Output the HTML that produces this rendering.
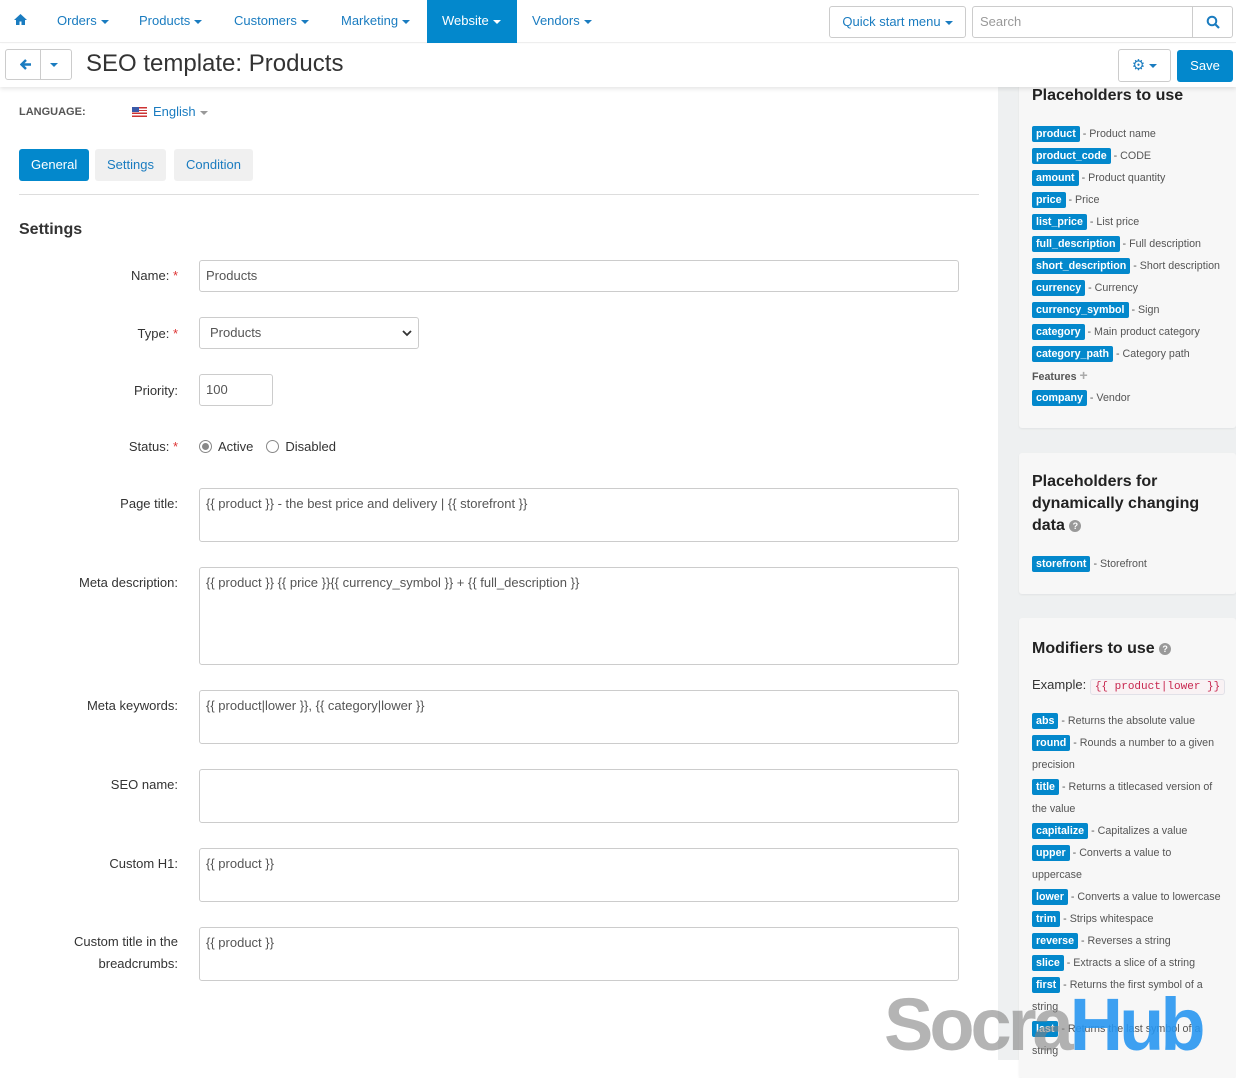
<!DOCTYPE html>
<html><head><meta charset="utf-8"><style>
*{box-sizing:border-box;margin:0;padding:0}
body{width:1236px;height:1060px;overflow:hidden;font-family:"Liberation Sans",sans-serif;font-size:13px;color:#333;background:#fff;position:relative}
.nav{position:absolute;top:0;left:0;right:0;height:43px;background:#fff;border-bottom:1px solid #eee}
.nav a{position:absolute;top:0;height:43px;line-height:42px;color:#1a7cc0;font-size:13px;text-decoration:none}
.car{display:inline-block;width:0;height:0;border-left:4px solid transparent;border-right:4px solid transparent;border-top:4px solid currentColor;vertical-align:middle;margin-left:4px}
.tb{position:absolute;top:44px;left:0;right:0;height:43px;background:#fff;box-shadow:0 2px 4px rgba(0,0,0,.1);z-index:2}
.btn{position:absolute;border:1px solid #ccc;border-radius:3px;background:#fff}
.side{position:absolute;left:998px;top:87px;width:238px;height:973px;background:#eef0f1}
.card{position:absolute;left:21px;width:217px;background:#f7f7f7;border-radius:3px;box-shadow:0 1px 2px rgba(0,0,0,.06);padding:0 0 0 13px}
.card h3{font-size:16px;font-weight:bold;color:#222;line-height:22px}
.it{font-size:10.7px;color:#555;line-height:22px;white-space:nowrap}
.b{display:inline-block;background:#0388cc;color:#fff;font-weight:bold;font-size:10.7px;line-height:16px;padding:0 4px;border-radius:2px}
.lab{position:absolute;right:1058px;font-size:13px;color:#333;text-align:right}
.req{color:#d33}
.inp{position:absolute;left:199px;width:760px;border:1px solid #ccc;border-radius:3px;background:#fff;padding:7px 6px;font-size:13px;color:#555}
.tab{position:absolute;top:149px;height:32px;line-height:31px;border-radius:3px;padding:0 12px;font-size:13px}
</style></head><body>
<div class="nav">
<a style="left:14px"><svg width="13" height="11" viewBox="0 0 13 11"><path d="M6.5 0L0 6h2v5h3.5V7.5h2V11H11V6h2z" fill="#1a7cc0"/></svg></a>
<a style="left:57px">Orders<span class="car"></span></a>
<a style="left:139px">Products<span class="car"></span></a>
<a style="left:234px">Customers<span class="car"></span></a>
<a style="left:341px">Marketing<span class="car"></span></a>
<a style="left:427px;width:90px;background:#0388cc;color:#fff;padding-left:15px">Website<span class="car"></span></a>
<a style="left:532px">Vendors<span class="car"></span></a>
<div class="btn" style="left:829px;top:6px;width:137px;height:32px;line-height:30px;text-align:center;color:#1a7cc0">Quick start menu<span class="car"></span></div>
<div class="btn" style="left:972px;top:6px;width:261px;height:32px;line-height:30px;padding-left:7px;color:#999">Search<div style="position:absolute;right:0;top:0;width:40px;height:30px;border-left:1px solid #ccc"><svg style="position:absolute;left:13px;top:8px" width="14" height="14" viewBox="0 0 14 14"><circle cx="6" cy="6" r="4.3" stroke="#1a7cc0" stroke-width="2" fill="none"/><path d="M9 9l4 4" stroke="#1a7cc0" stroke-width="2.2"/></svg></div></div>
</div>
<div class="tb">
<div class="btn" style="left:5px;top:5px;width:67px;height:31px"><div style="position:absolute;left:34px;top:0;height:29px;border-left:1px solid #ccc"></div>
<svg style="position:absolute;left:14px;top:9px" width="12" height="11" viewBox="0 0 12 11"><path d="M6 1L1.5 5.5 6 10M2 5.5h9" stroke="#1a7cc0" stroke-width="2.4" fill="none"/></svg>
<span class="car" style="position:absolute;left:44px;top:13px;color:#1a7cc0;margin:0"></span></div>
<div style="position:absolute;left:86px;top:6px;font-size:24px;color:#333;line-height:28px">SEO template: Products</div>
<div class="btn" style="left:1118px;top:5px;width:53px;height:33px;text-align:center;line-height:31px;color:#1a7cc0;font-size:15px">⚙<span class="car"></span></div>
<div style="position:absolute;left:1177px;top:6px;width:56px;height:32px;background:#0388cc;color:#fff;border-radius:3px;text-align:center;line-height:32px">Save</div>
</div>
<div style="position:absolute;left:19px;top:106px;font-size:11px;font-weight:bold;color:#555">LANGUAGE:</div>
<div style="position:absolute;left:132px;top:104px;color:#1a7cc0;font-size:13px"><span style="display:inline-block;width:15px;height:10px;background:repeating-linear-gradient(#c33 0 1.4px,#fff 1.4px 2.8px);position:relative;vertical-align:-1px;margin-right:6px"><span style="position:absolute;left:0;top:0;width:7px;height:5px;background:#3a5aa8"></span></span>English<span class="car" style="color:#999"></span></div>
<div class="tab" style="left:19px;background:#0388cc;color:#fff">General</div>
<div class="tab" style="left:95px;background:#f0f0f0;color:#1a7cc0">Settings</div>
<div class="tab" style="left:174px;background:#f0f0f0;color:#1a7cc0">Condition</div>
<div style="position:absolute;left:19px;top:194px;width:960px;border-top:1px solid #ddd"></div>
<div style="position:absolute;left:19px;top:221px;font-size:16px;font-weight:bold;color:#333">Settings</div>
<div class="lab" style="top:268px">Name: <span class="req">*</span></div>
<div class="inp" style="top:260px;height:32px">Products</div>
<div class="lab" style="top:326px">Type: <span class="req">*</span></div>
<div class="inp" style="top:317px;height:32px;width:220px;padding-left:10px">Products<svg style="position:absolute;right:6px;top:12px" width="10" height="7" viewBox="0 0 10 7"><path d="M1 1l4 4 4-4" stroke="#333" stroke-width="1.8" fill="none"/></svg></div>
<div class="lab" style="top:383px">Priority:</div>
<div class="inp" style="top:374px;height:32px;width:74px">100</div>
<div class="lab" style="top:439px">Status: <span class="req">*</span></div>
<div style="position:absolute;left:199px;top:439px;font-size:13px;color:#333"><span style="display:inline-block;width:13px;height:13px;border:1px solid #888;border-radius:50%;vertical-align:-2px;position:relative;margin-right:6px"><span style="position:absolute;left:2px;top:2px;width:7px;height:7px;border-radius:50%;background:#888"></span></span>Active<span style="display:inline-block;width:13px;height:13px;border:1px solid #888;border-radius:50%;vertical-align:-2px;margin:0 6px 0 13px"></span>Disabled</div>
<div class="lab" style="top:496px">Page title:</div>
<div class="inp" style="top:488px;height:54px">{{ product }} - the best price and delivery | {{ storefront }}</div>
<div class="lab" style="top:575px">Meta description:</div>
<div class="inp" style="top:567px;height:98px">{{ product }} {{ price }}{{ currency_symbol }} + {{ full_description }}</div>
<div class="lab" style="top:698px">Meta keywords:</div>
<div class="inp" style="top:690px;height:54px">{{ product|lower }}, {{ category|lower }}</div>
<div class="lab" style="top:777px">SEO name:</div>
<div class="inp" style="top:769px;height:54px"></div>
<div class="lab" style="top:856px">Custom H1:</div>
<div class="inp" style="top:848px;height:54px">{{ product }}</div>
<div class="lab" style="line-height:22px;top:931px">Custom title in the<br>breadcrumbs:</div>
<div class="inp" style="top:927px;height:54px">{{ product }}</div>

<div class="side">
<div class="card" style="top:-10px;height:351px;padding-top:8px">
<h3>Placeholders to use</h3>
<div style="height:16px"></div>
<div class="it"><span class="b">product</span> - Product name</div>
<div class="it"><span class="b">product_code</span> - CODE</div>
<div class="it"><span class="b">amount</span> - Product quantity</div>
<div class="it"><span class="b">price</span> - Price</div>
<div class="it"><span class="b">list_price</span> - List price</div>
<div class="it"><span class="b">full_description</span> - Full description</div>
<div class="it"><span class="b">short_description</span> - Short description</div>
<div class="it"><span class="b">currency</span> - Currency</div>
<div class="it"><span class="b">currency_symbol</span> - Sign</div>
<div class="it"><span class="b">category</span> - Main product category</div>
<div class="it"><span class="b">category_path</span> - Category path</div>
<div class="it" style="font-weight:bold;color:#555;line-height:20px">Features <span style="color:#aaa;font-size:14px">+</span></div>
<div class="it"><span class="b">company</span> - Vendor</div>
</div>
<div class="card" style="top:366px;height:141px;padding-top:18px">
<h3>Placeholders for dynamically changing data <span style="display:inline-block;width:12px;height:12px;border-radius:50%;background:#999;color:#fff;font-size:9px;line-height:12px;text-align:center;vertical-align:1px">?</span></h3>
<div style="height:16px"></div>
<div class="it"><span class="b">storefront</span> - Storefront</div>
</div>
<div class="card" style="top:531px;height:460px;padding-top:20px">
<h3>Modifiers to use <span style="display:inline-block;width:12px;height:12px;border-radius:50%;background:#999;color:#fff;font-size:9px;line-height:12px;text-align:center;vertical-align:1px">?</span></h3>
<div style="margin-top:17px;font-size:13px;color:#333">Example: <span style="font-family:'Liberation Mono',monospace;font-size:11px;color:#c7254e;border:1px solid #e1e1e8;background:#f9f2f4;padding:1px 4px;border-radius:3px">{{ product|lower }}</span></div>
<div style="height:17px"></div>
<div>
<div class="it"><span class="b">abs</span> - Returns the absolute value</div>
<div class="it"><span class="b">round</span> - Rounds a number to a given<br>precision</div>
<div class="it"><span class="b">title</span> - Returns a titlecased version of<br>the value</div>
<div class="it"><span class="b">capitalize</span> - Capitalizes a value</div>
<div class="it"><span class="b">upper</span> - Converts a value to<br>uppercase</div>
<div class="it"><span class="b">lower</span> - Converts a value to lowercase</div>
<div class="it"><span class="b">trim</span> - Strips whitespace</div>
<div class="it"><span class="b">reverse</span> - Reverses a string</div>
<div class="it"><span class="b">slice</span> - Extracts a slice of a string</div>
<div class="it"><span class="b">first</span> - Returns the first symbol of a<br>string</div>
<div class="it"><span class="b">last</span> - Returns the last symbol of a<br>string</div>
</div>
</div>
</div>
<div style="position:absolute;left:884px;top:985px;font-size:74px;font-weight:bold;line-height:80px;letter-spacing:-4px;z-index:5;white-space:nowrap"><span style="color:rgba(130,130,130,.6)">Socra</span><span style="color:rgba(40,150,240,.9)">Hub</span></div>
</body></html>
